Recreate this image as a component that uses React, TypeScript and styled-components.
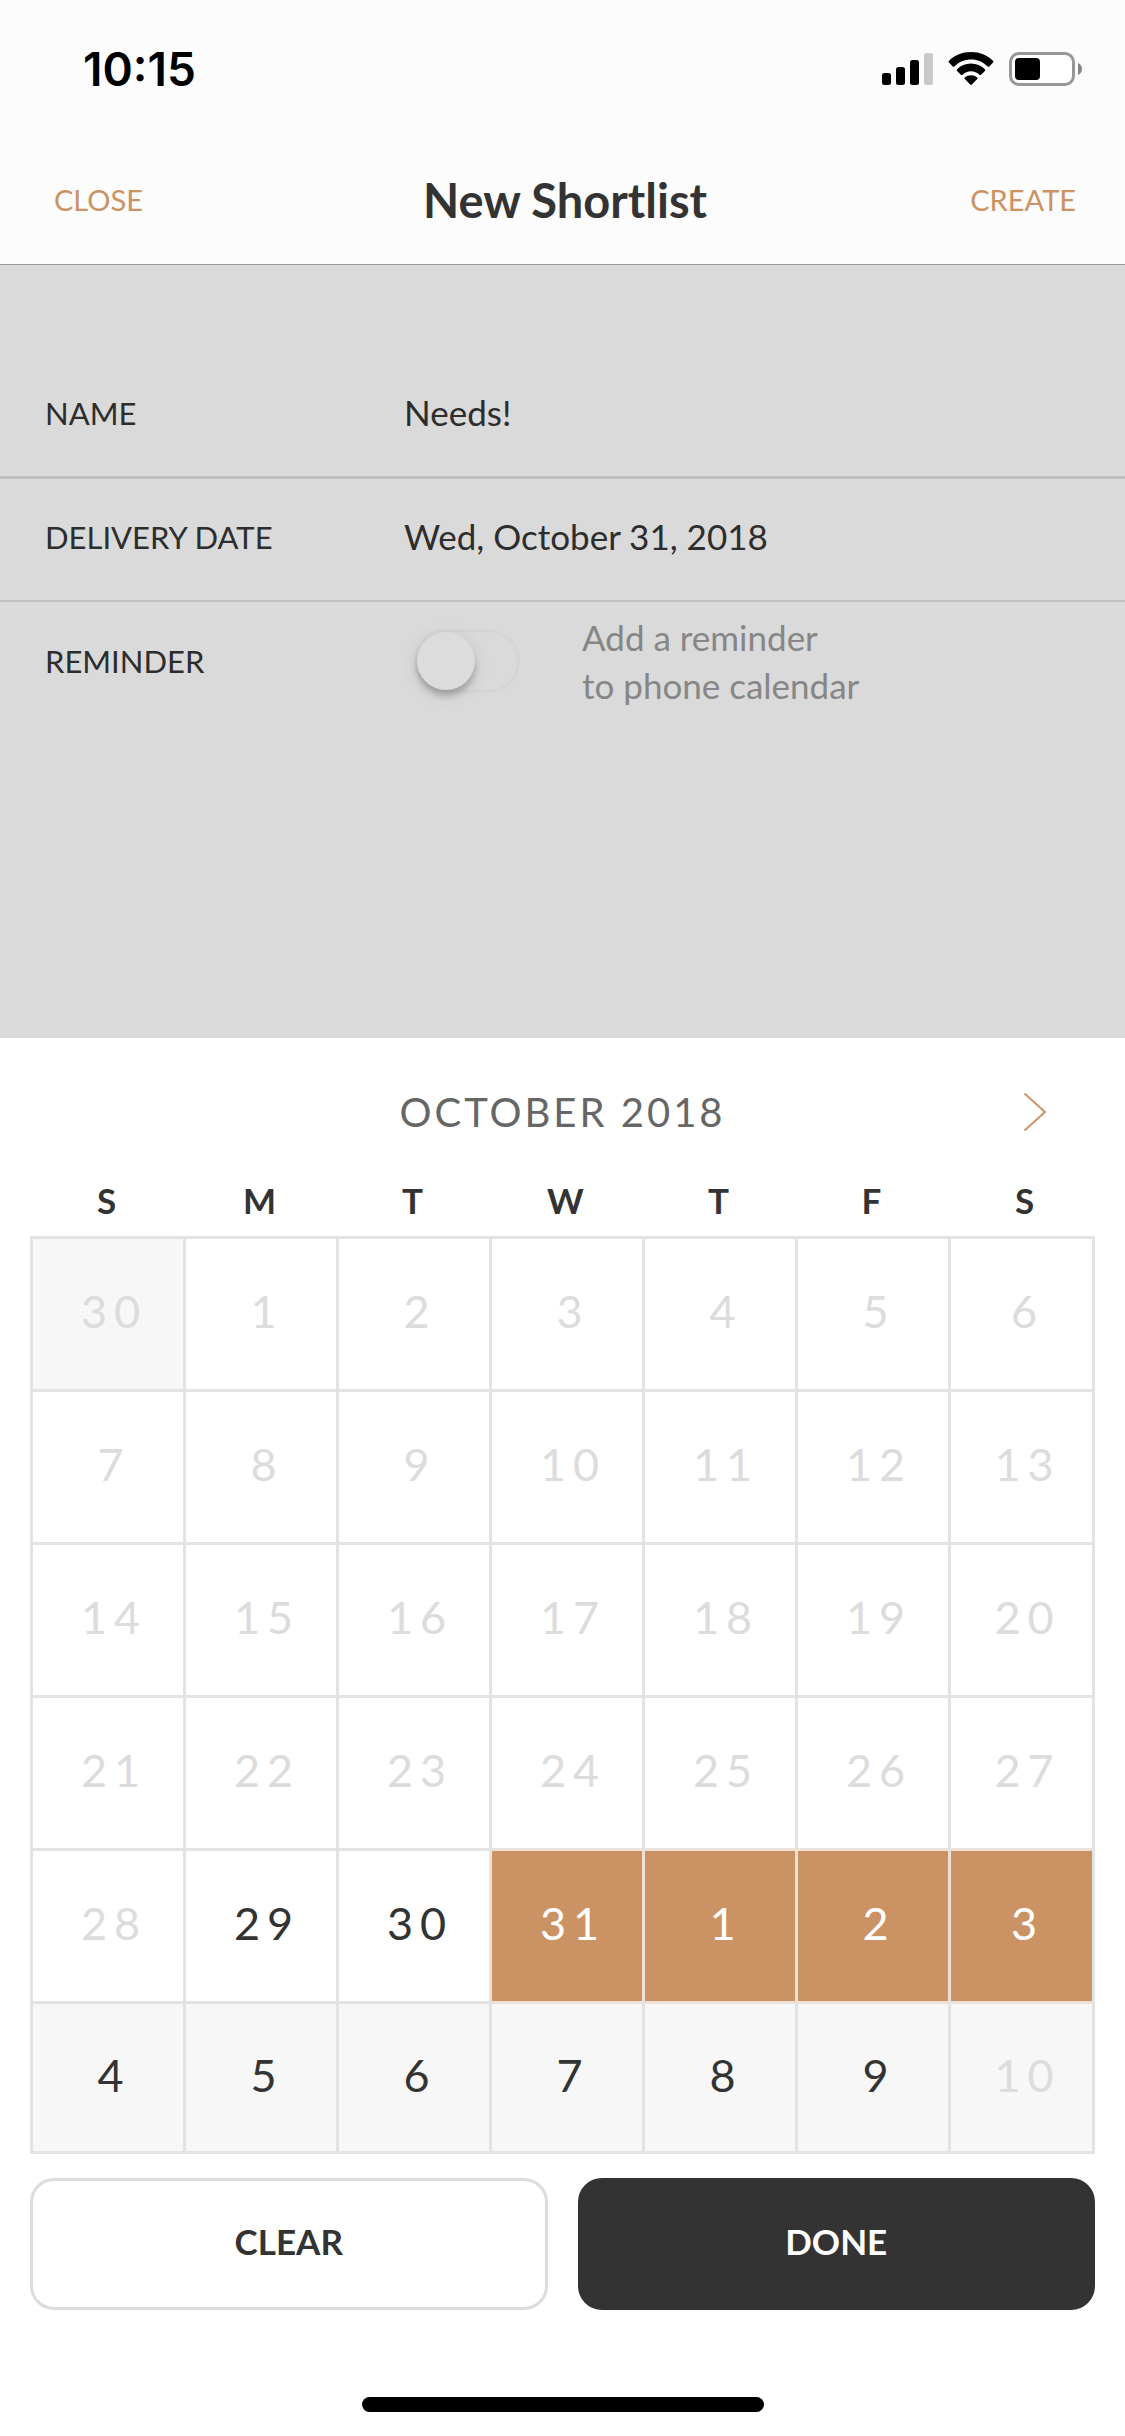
import React, { useState } from "react";
import styled, { createGlobalStyle } from "styled-components";

const color = {
  ink: "#333333",
  accent: "#cb9263",
  accentLine: "#ede1d8",
  line: "#e3e3e3",
  muted: "#dcdcdc",
  outside: "#f7f7f7",
};

const GlobalStyle = createGlobalStyle`
  *, *::before, *::after { box-sizing: border-box; }
  body { margin: 0; background: #ffffff; }
  button, input {
    font: inherit;
    color: inherit;
    letter-spacing: inherit;
    margin: 0;
    padding: 0;
    border: 0;
    border-radius: 0;
    background: none;
  }
  button { cursor: pointer; }
`;

const Screen = styled.div`
  min-height: 100vh;
  display: flex;
  flex-direction: column;
  font-family: Lato, "Liberation Sans", sans-serif;
  color: ${color.ink};
  background: #ffffff;
`;

const Header = styled.header`
  background: #fcfcfc;
  border-bottom: 1px solid #979797;
`;

const StatusBar = styled.div`
  display: flex;
  justify-content: space-between;
  align-items: center;
  height: 138px;
  padding: 0 42px 0 83px;
`;

const Clock = styled.time`
  font-family: Inter, "Liberation Sans", sans-serif;
  font-size: 46px;
  font-weight: 600;
  color: #000000;
`;

const StatusIcons = styled.div`
  display: flex;
  align-items: center;
  gap: 15px;
`;

const NavBar = styled.nav`
  display: grid;
  grid-template-columns: 1fr auto 1fr;
  align-items: center;
  height: 126px;
  padding: 0 49px 2px 54px;
`;

const NavButton = styled.button<{ $end?: boolean }>`
  justify-self: ${(p) => (p.$end ? "end" : "start")};
  font-size: 29px;
  line-height: 40px;
  color: ${color.accent};
`;

const Title = styled.h1`
  margin: 0;
  font-size: 47px;
  line-height: 56px;
  font-weight: 700;
`;

const Form = styled.form`
  background: #dadada;
  color: #2d2d2d;
  padding: 91px 0 313px;
`;

const Row = styled.div<{ $line?: number }>`
  display: grid;
  grid-template-columns: 359px 1fr;
  align-items: center;
  height: 123px;
  padding: 0 0 6px 45px;
  border-bottom: ${(p) => p.$line ?? 0}px solid #bfbfbf;
`;

const Label = styled.label`
  font-size: 31px;
  line-height: 40px;
`;

const Field = styled.input`
  width: 100%;
  height: 48px;
  padding-bottom: 2px;
  font-size: 35px;
  outline: none;
`;

const Reminder = styled.div`
  display: flex;
  align-items: center;
  gap: 62px;
  padding-left: 10px;
`;

const Switch = styled.input`
  appearance: none;
  flex: none;
  display: flex;
  align-items: center;
  width: 106px;
  height: 64px;
  padding: 0 3px;
  border-radius: 32px;
  box-shadow: inset 0 0 0 3px #d5d5d5;

  &::before {
    content: "";
    width: 58px;
    height: 58px;
    border-radius: 50%;
    background: #dcdcdc;
    box-shadow: 0 6px 6px rgba(0, 0, 0, 0.2), 0 4px 18px rgba(0, 0, 0, 0.1);
  }

  &:checked { justify-content: flex-end; background: ${color.accent}; }
`;

const Hint = styled.p`
  margin: 0;
  font-size: 35px;
  line-height: 48px;
  color: #868686;
`;

const Sheet = styled.section`
  flex: 1;
  display: flex;
  flex-direction: column;
  padding: 44px 30px 24px;
  background: #ffffff;
`;

const MonthBar = styled.div`
  display: grid;
  grid-template-columns: 60px 1fr 60px;
  align-items: center;
  height: 60px;
  padding: 0 30px;
`;

const Month = styled.h2`
  grid-column: 2;
  margin: 0;
  text-align: center;
  font-size: 40px;
  line-height: 48px;
  font-weight: 400;
  letter-spacing: 3px;
  color: #666666;
`;

const NextButton = styled.button`
  display: grid;
  place-items: center;
  height: 60px;
`;

const Calendar = styled.table`
  display: block;
  margin-top: 34px;
`;

const WeekHead = styled.thead`
  display: block;
  height: 60px;
  margin-right: -6px;
`;

const WeekdayRow = styled.tr`
  display: grid;
  grid-template-columns: repeat(7, 1fr);
`;

const Weekday = styled.th`
  padding: 0;
  font-size: 35px;
  line-height: 48px;
  font-weight: 700;
`;

const Weeks = styled.tbody`
  display: grid;
  gap: 3px;
  padding: 3px;
  background: ${color.line};
`;

const Week = styled.tr`
  display: grid;
  grid-template-columns: repeat(6, 150fr) 141fr;
  gap: 3px;
  height: 150px;

  &:last-child { height: 147px; }
`;

const DayCell = styled.td`
  display: grid;
  padding: 0;
`;

type DayKind = "past" | "open" | "picked";

const dayColor: Record<DayKind, string> = {
  past: color.muted,
  open: color.ink,
  picked: "#ffffff",
};

const Day = styled.button<{ $kind: DayKind; $outside: boolean }>`
  padding: 0 0 6px 12px;
  font-size: 45px;
  letter-spacing: 7px;
  color: ${(p) => dayColor[p.$kind]};
  background: ${(p) =>
    p.$kind === "picked" ? color.accent : p.$outside ? color.outside : "#ffffff"};
  box-shadow: ${(p) =>
    p.$kind === "picked"
      ? `-3px 0 ${color.accentLine}, 0 -3px ${color.accentLine}, 0 3px ${color.accentLine}`
      : "none"};
`;

const Actions = styled.div`
  display: grid;
  grid-template-columns: 1fr 1fr;
  gap: 30px;
  margin-top: 24px;
`;

const ActionButton = styled.button<{ $solid?: boolean }>`
  height: 132px;
  padding-bottom: 6px;
  border: 3px solid ${(p) => (p.$solid ? color.ink : color.muted)};
  border-radius: 24px;
  background: ${(p) => (p.$solid ? color.ink : "#ffffff")};
  color: ${(p) => (p.$solid ? "#ffffff" : color.ink)};
  font-size: 35px;
  font-weight: 700;
`;

const HomeIndicator = styled.div`
  width: 402px;
  max-width: 60%;
  height: 15px;
  margin: auto auto 0;
  border-radius: 8px;
  background: #000000;
`;

const Signal = () => (
  <svg width="51" height="34" viewBox="0 0 51 34" aria-hidden="true">
    <rect x="0" y="21" width="9" height="12" rx="2.5" />
    <rect x="14" y="15" width="9" height="18" rx="2.5" />
    <rect x="28" y="8" width="9" height="25" rx="2.5" />
    <rect x="42" y="1" width="9" height="32" rx="2.5" fill="#c9c9c9" />
  </svg>
);

const Wifi = () => (
  <svg width="46" height="34" viewBox="0 0 46 34" aria-hidden="true">
    <path d="M23 0C14.5 0 6.700 3.300 1 8.800c-.6.5-.6 1.300 0 1.800l3.700 3.800c.5.500 1.200.500 1.700 0C10.700 10.200 16.500 7.500 23 7.500s12.300 2.700 16.600 6.900c.5.500 1.200.500 1.700 0l3.700-3.800c.6-.5.6-1.300 0-1.800C39.300 3.300 31.500 0 23 0Z" />
    <path d="M23 11.600c-5.400 0-10.300 2.100-13.900 5.600-.5.500-.5 1.200 0 1.700l3.800 3.800c.5.500 1.100.400 1.600 0 2.300-2.100 5.200-3.400 8.500-3.400s6.200 1.300 8.500 3.400c.5.400 1.100.5 1.600 0l3.800-3.800c.5-.5.5-1.200 0-1.700-3.600-3.500-8.500-5.600-13.900-5.600Z" />
    <path d="M23 23.200c-2.300 0-4.500.8-6.200 2.200-.5.400-.5 1.100 0 1.600l5.400 5.500c.5.500 1.100.500 1.600 0l5.400-5.500c.5-.5.5-1.200 0-1.600-1.700-1.400-3.900-2.200-6.200-2.200Z" />
  </svg>
);

const Battery = () => (
  <svg width="74" height="34" viewBox="0 0 74 34" aria-hidden="true">
    <rect x="1.500" y="1.500" width="63" height="31" rx="8.500" fill="#ffffff" stroke="#979797" strokeWidth="3" />
    <rect x="6" y="6" width="25" height="22" rx="4" />
    <path d="M69 11c2.400 1 4 3.300 4 6s-1.600 5-4 6Z" fill="#868686" />
  </svg>
);

const Chevron = () => (
  <svg width="24" height="40" viewBox="0 0 24 40" fill="none" aria-hidden="true">
    <path d="M1.500 1.500 22 20 1.500 38.500" stroke={color.accent} strokeWidth="2" />
  </svg>
);

const weekdays = ["S", "M", "T", "W", "T", "F", "S"];

const firstDay = Date.UTC(2018, 8, 30);
const firstOpen = Date.UTC(2018, 9, 29);
const lastOpen = Date.UTC(2018, 10, 9);
const pickedFrom = Date.UTC(2018, 9, 31);
const pickedTo = Date.UTC(2018, 10, 3);
const dayMs = 86400000;

const weeks = Array.from({ length: 6 }, (_, w) =>
  Array.from({ length: 7 }, (_, d) => firstDay + (w * 7 + d) * dayMs)
);

export default function App() {
  const [range, setRange] = useState<[number, number] | null>([pickedFrom, pickedTo]);

  const kindOf = (time: number): DayKind => {
    if (range && time >= range[0] && time <= range[1]) return "picked";
    return time >= firstOpen && time <= lastOpen ? "open" : "past";
  };

  return (
    <Screen>
      <GlobalStyle />
      <Header>
        <StatusBar>
          <Clock>10:15</Clock>
          <StatusIcons>
            <Signal />
            <Wifi />
            <Battery />
          </StatusIcons>
        </StatusBar>
        <NavBar>
          <NavButton type="button">CLOSE</NavButton>
          <Title>New Shortlist</Title>
          <NavButton type="button" $end>CREATE</NavButton>
        </NavBar>
      </Header>

      <Form onSubmit={(e) => e.preventDefault()}>
        <Row $line={3}>
          <Label htmlFor="name">NAME</Label>
          <Field id="name" type="text" defaultValue="Needs!" />
        </Row>
        <Row $line={2}>
          <Label htmlFor="date">DELIVERY DATE</Label>
          <Field id="date" type="text" defaultValue="Wed, October 31, 2018" />
        </Row>
        <Row>
          <Label htmlFor="reminder">REMINDER</Label>
          <Reminder>
            <Switch id="reminder" type="checkbox" role="switch" />
            <Hint>
              Add a reminder
              <br />
              to phone calendar
            </Hint>
          </Reminder>
        </Row>
      </Form>

      <Sheet>
        <MonthBar>
          <Month>OCTOBER 2018</Month>
          <NextButton type="button" aria-label="Next month">
            <Chevron />
          </NextButton>
        </MonthBar>
        <Calendar>
          <WeekHead>
            <WeekdayRow>
              {weekdays.map((name, i) => (
                <Weekday key={i} scope="col">{name}</Weekday>
              ))}
            </WeekdayRow>
          </WeekHead>
          <Weeks>
            {weeks.map((days) => (
              <Week key={days[0]}>
                {days.map((time) => {
                  const date = new Date(time);
                  return (
                    <DayCell key={time}>
                      <Day
                        type="button"
                        $kind={kindOf(time)}
                        $outside={date.getUTCMonth() !== 9}
                        onClick={() => setRange([time, time + 3 * dayMs])}
                      >
                        {date.getUTCDate()}
                      </Day>
                    </DayCell>
                  );
                })}
              </Week>
            ))}
          </Weeks>
        </Calendar>
        <Actions>
          <ActionButton type="button" onClick={() => setRange(null)}>CLEAR</ActionButton>
          <ActionButton type="button" $solid>DONE</ActionButton>
        </Actions>
        <HomeIndicator />
      </Sheet>
    </Screen>
  );
}
